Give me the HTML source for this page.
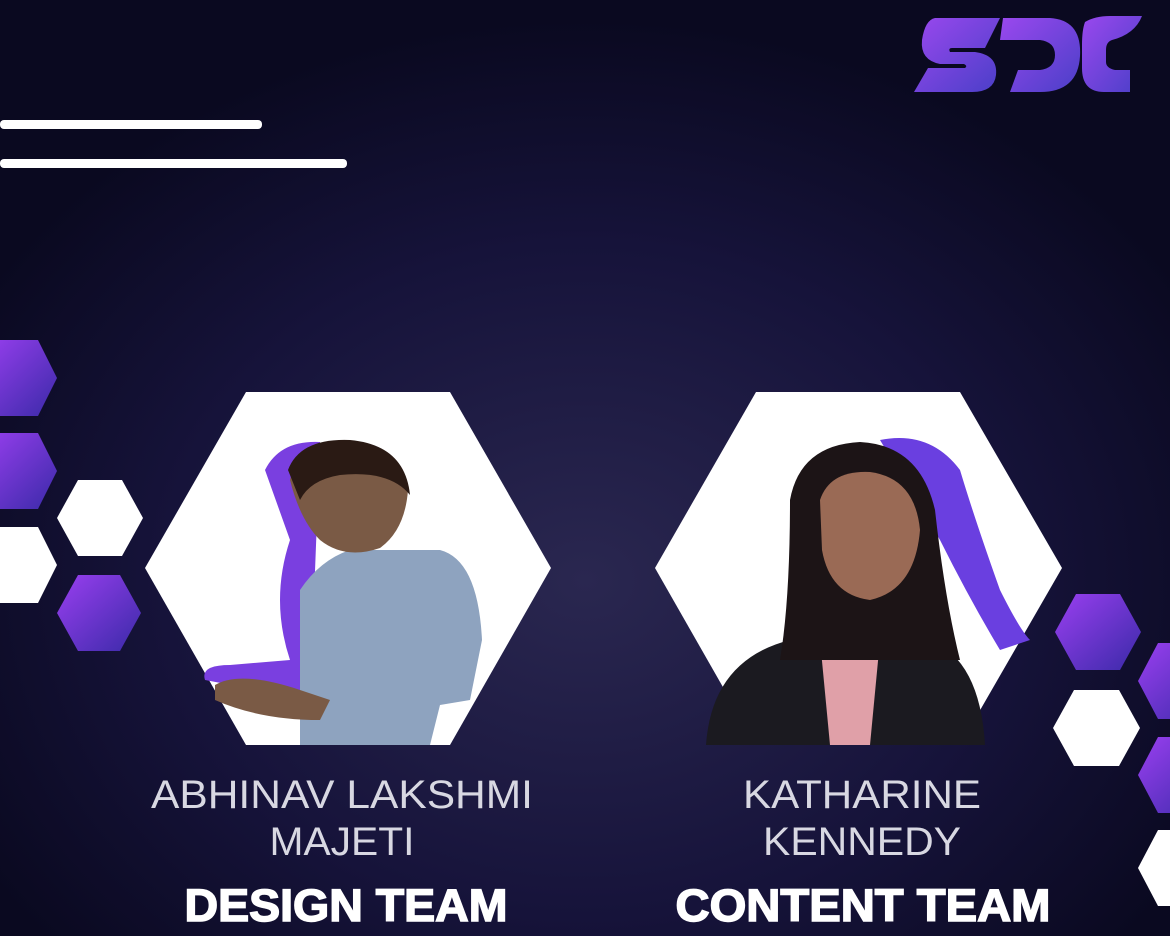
<!DOCTYPE html>
<html><head><meta charset="utf-8"><style>
html,body{margin:0;padding:0;background:#0d0b24;}
svg{display:block}
</style></head><body>
<svg width="1170" height="936" viewBox="0 0 1170 936" xmlns="http://www.w3.org/2000/svg">
<defs>
<radialGradient id="bg" cx="0.5" cy="0.62" r="0.6">
<stop offset="0" stop-color="#2a2750"/><stop offset="0.6" stop-color="#16133a"/><stop offset="1" stop-color="#0a0920"/>
</radialGradient>
<linearGradient id="pg" x1="0" y1="0" x2="1" y2="1">
<stop offset="0" stop-color="#9a3ff0"/><stop offset="1" stop-color="#3a2aa8"/>
</linearGradient>
<linearGradient id="lg" x1="0" y1="0" x2="1" y2="1">
<stop offset="0" stop-color="#9a48ee"/><stop offset="1" stop-color="#4a3fc8"/>
</linearGradient>
</defs>
<rect width="1170" height="936" fill="url(#bg)"/>
<rect x="0" y="120" width="262" height="9" rx="4" fill="#fff"/>
<rect x="0" y="159" width="347" height="9" rx="4" fill="#fff"/>
<g fill="url(#lg)">
<path d="M935 18 H1000 L985 48 H952 Q948 48 950 52 L975 52 Q998 55 996 75 Q994 92 972 92 H914 L928 68 H965 Q968 66 964 64 H940 Q920 60 922 40 Q925 20 935 18 Z"/>
<path d="M1003 18 H1050 Q1082 20 1080 56 Q1078 92 1040 92 H1010 L1018 70 H1040 Q1055 68 1055 55 Q1055 42 1040 40 H1000 Z"/>
<path d="M1085 22 Q1095 16 1110 16 H1142 Q1135 34 1112 40 Q1106 42 1106 50 V62 Q1106 68 1115 70 H1130 V92 H1104 Q1082 92 1082 68 V45 Q1082 30 1085 22 Z"/>
</g>
<polygon points="-20,378 0,340 38,340 57,378 38,416 0,416" fill="url(#pg)"/>
<polygon points="-20,471 0,433 38,433 57,471 38,509 0,509" fill="url(#pg)"/>
<polygon points="57,518 78,480 122,480 143,518 122,556 78,556" fill="#fff"/>
<polygon points="-20,565 0,527 38,527 57,565 38,603 0,603" fill="#fff"/>
<polygon points="57,613 78,575 120,575 141,613 120,651 78,651" fill="url(#pg)"/>
<polygon points="1055,632 1076,594 1120,594 1141,632 1120,670 1076,670" fill="url(#pg)"/>
<polygon points="1138,681 1158,643 1200,643 1220,681 1200,719 1158,719" fill="url(#pg)"/>
<polygon points="1053,728 1074,690 1119,690 1140,728 1119,766 1074,766" fill="#fff"/>
<polygon points="1138,775 1158,737 1200,737 1220,775 1200,813 1158,813" fill="url(#pg)"/>
<polygon points="1138,868 1158,830 1200,830 1220,868 1200,906 1158,906" fill="#fff"/>
<polygon points="145,568 246,392 450,392 551,568 450,745 246,745" fill="#fff"/>
<polygon points="655,568 756,392 960,392 1062,568 960,745 756,745" fill="#fff"/>
<g>
<path d="M265 470 Q280 440 320 442 L310 700 L205 680 Q200 665 230 665 L290 660 Q270 600 290 540 Z" fill="#7a3fe0"/>
<path d="M300 745 V590 Q320 560 350 550 H440 Q478 560 482 640 L470 700 L440 705 L430 745 Z" fill="#8ea3bf"/>
<path d="M290 480 Q300 440 350 442 Q400 445 408 490 Q405 530 380 548 Q345 560 320 540 Q300 520 290 480 Z" fill="#7a5a45"/>
<path d="M288 470 Q300 438 350 440 Q405 445 410 495 Q390 470 340 475 Q310 480 300 500 Z" fill="#2a1a14"/>
<path d="M215 685 Q240 670 300 690 L330 700 L320 720 Q260 720 215 700 Z" fill="#7a5a45"/>
</g>
<g>
<path d="M880 440 Q930 430 960 470 Q975 520 1000 590 Q1020 630 1030 640 L1000 650 Q970 600 940 540 Z" fill="#6a3fe0"/>
<path d="M706 745 Q712 660 790 640 H930 Q980 660 985 745 Z" fill="#1b1a20"/>
<path d="M820 640 L880 640 L870 745 L830 745 Z" fill="#e0a0a8"/>
<path d="M790 500 Q800 445 860 442 Q920 445 935 510 Q945 600 960 660 L780 660 Q790 600 790 500 Z" fill="#1c1416"/>
<path d="M820 500 Q830 470 870 472 Q915 478 920 530 Q915 590 870 600 Q830 595 822 550 Z" fill="#9a6a55"/>
</g>
<g font-family="Liberation Sans, sans-serif" fill="#d8d8e2" text-anchor="middle">
<text x="342" y="808" font-size="40" textLength="382" lengthAdjust="spacingAndGlyphs">ABHINAV LAKSHMI</text>
<text x="342" y="855" font-size="40" textLength="145" lengthAdjust="spacingAndGlyphs">MAJETI</text>
<text x="862" y="808" font-size="40" textLength="238" lengthAdjust="spacingAndGlyphs">KATHARINE</text>
<text x="862" y="855" font-size="40" textLength="198" lengthAdjust="spacingAndGlyphs">KENNEDY</text>
</g>
<g font-family="Liberation Sans, sans-serif" font-weight="bold" fill="#fff" stroke="#fff" stroke-width="1.5" text-anchor="middle">
<text x="346" y="921" font-size="45" textLength="323" lengthAdjust="spacingAndGlyphs">DESIGN TEAM</text>
<text x="863" y="921" font-size="45" textLength="375" lengthAdjust="spacingAndGlyphs">CONTENT TEAM</text>
</g>
</svg>
</body></html>
